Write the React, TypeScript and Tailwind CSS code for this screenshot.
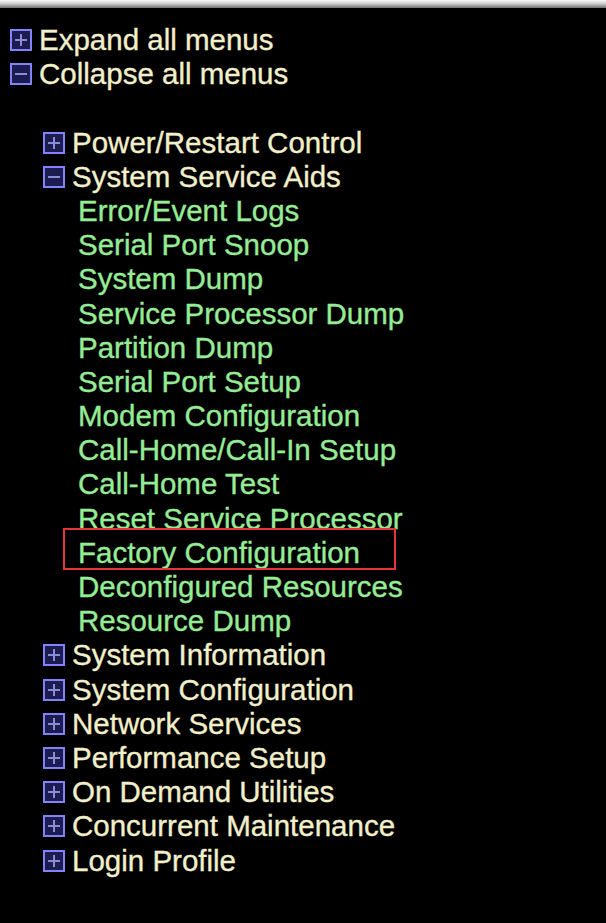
import React from "react";

const PlusMinus = ({ minus }: { minus?: boolean }) => (
  <span className="relative inline-block w-[22px] h-[22px] shrink-0 border-2 border-[#8282fa] bg-[#1c1c50]">
    <span className="absolute left-[3px] right-[3px] top-[8px] h-[2px] bg-[#8c8cd4]" />
    {!minus && <span className="absolute top-[3px] bottom-[3px] left-[8px] w-[2px] bg-[#8c8cd4]" />}
  </span>
);

const Head = ({ label, minus, indent }: { label: string; minus?: boolean; indent?: boolean }) => (
  <div className={`flex items-center gap-[7px] h-[34.2px] ${indent ? "pl-[43px]" : "pl-[10px]"}`}>
    <PlusMinus minus={minus} />
    <span className="text-[#f2efcb]">{label}</span>
  </div>
);

const Item = ({ label, boxed }: { label: string; boxed?: boolean }) => (
  <div className="h-[34.2px] pl-[78px] text-[#96ec96]">
    <span className="relative">
      {label}
      {boxed && (
        <span className="absolute pointer-events-none border-2 border-[#e53538] left-[-15px] top-[-8px] w-[333px] h-[42px]" />
      )}
    </span>
  </div>
);

export default function App() {
  const subs = [
    "Error/Event Logs",
    "Serial Port Snoop",
    "System Dump",
    "Service Processor Dump",
    "Partition Dump",
    "Serial Port Setup",
    "Modem Configuration",
    "Call-Home/Call-In Setup",
    "Call-Home Test",
    "Reset Service Processor",
    "Factory Configuration",
    "Deconfigured Resources",
    "Resource Dump",
  ];
  const after = [
    "System Information",
    "System Configuration",
    "Network Services",
    "Performance Setup",
    "On Demand Utilities",
    "Concurrent Maintenance",
    "Login Profile",
  ];
  return (
    <div
      className="w-[606px] h-[923px] bg-black overflow-hidden whitespace-nowrap text-[29.5px] leading-[34.2px] [-webkit-text-stroke:0.35px]"
      style={{ fontFamily: '"Liberation Sans", Arial, sans-serif' }}
    >
      <div className="h-[8px] bg-gradient-to-b from-[#fafafa] via-[#c8c8c8] to-[#707070]" />
      <div className="pt-[15px]">
        <Head label="Expand all menus" />
        <Head label="Collapse all menus" minus />
        <div className="h-[34.2px]" />
        <Head label="Power/Restart Control" indent />
        <Head label="System Service Aids" indent minus />
        {subs.map((s) => (
          <Item key={s} label={s} boxed={s === "Factory Configuration"} />
        ))}
        {after.map((s) => (
          <Head key={s} label={s} indent />
        ))}
      </div>
    </div>
  );
}
